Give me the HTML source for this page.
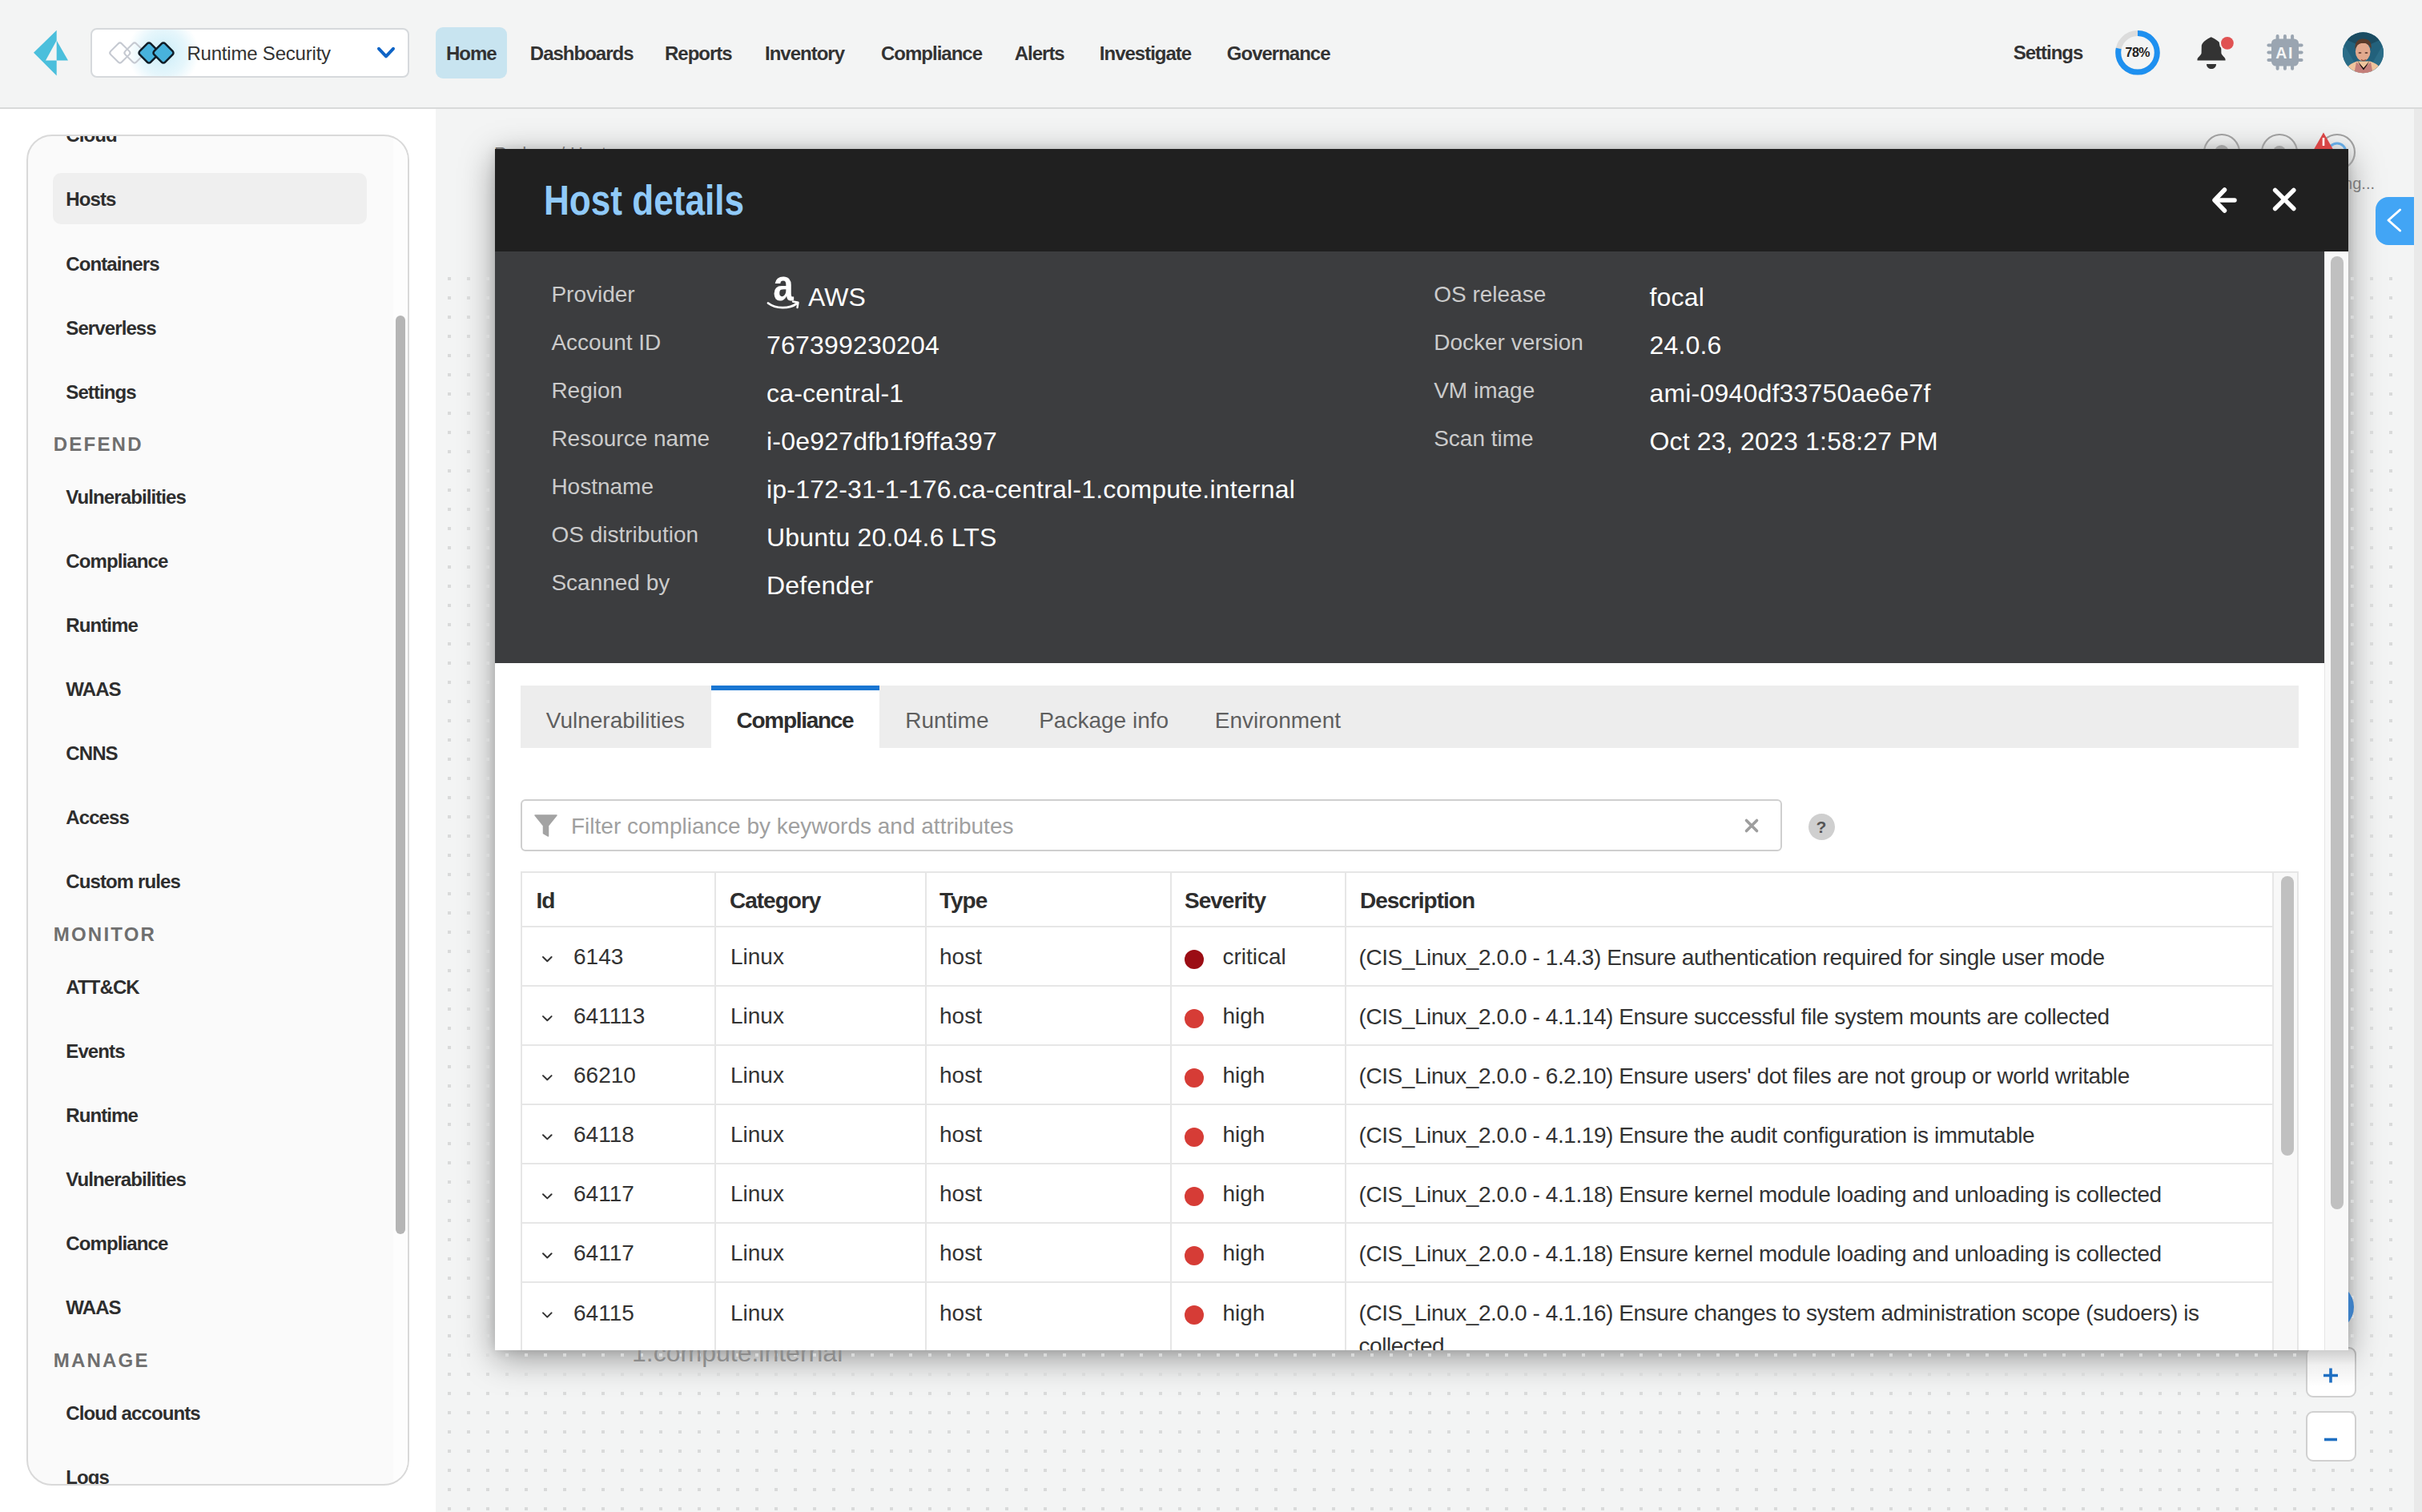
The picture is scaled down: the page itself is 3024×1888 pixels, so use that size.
<!DOCTYPE html>
<html><head><meta charset="utf-8"><title>Host details</title>
<style>
html,body{margin:0;padding:0;}
body{width:3024px;height:1888px;overflow:hidden;position:relative;background:#fff;font-family:"Liberation Sans",sans-serif;}
.a{position:absolute;}
.t{position:absolute;line-height:1;white-space:nowrap;font-family:"Liberation Sans",sans-serif;}
@media (max-width:2000px){html{zoom:0.5;}}
</style></head><body>
<div class="a" style="left:544px;top:136px;width:2470px;height:1752px;background:#f3f4f4;"></div>
<div class="a" style="left:3014px;top:136px;width:10px;height:1752px;background:#e9e9e9;"></div>
<div class="a" style="left:0;top:0;width:3024px;height:134px;background:#f3f4f4;border-bottom:2px solid #d8dada;"></div>
<svg class="a" style="left:0;top:0" width="100" height="110"><polygon points="42,65.7 70.7,37.7 70.7,50.4 57,75.6 70.7,75.6 70.7,94.5" fill="#4bbfdc"/><polygon points="70.7,50.4 85,75.6 70.7,75.6" fill="#4bbfdc"/></svg>
<div class="a" style="left:113px;top:35px;width:394px;height:58px;background:#fff;border:2px solid #d6d9dc;border-radius:8px;"></div>
<div class="a" style="left:115px;top:37px;width:394px;height:58px;overflow:hidden;border-radius:6px;"><div class="a" style="left:44px;top:-16px;width:90px;height:90px;border-radius:50%;background:radial-gradient(circle, rgba(140,215,240,0.45) 0%, rgba(140,215,240,0.22) 45%, rgba(140,215,240,0) 70%);"></div></div>
<svg class="a" style="left:120px;top:40px" width="120" height="54">
<g stroke-width="2.6" stroke-linejoin="round">
<rect x="-9.7" y="-9.7" width="19.4" height="19.4" rx="3" transform="translate(29.8,26) rotate(45)" fill="none" stroke="#c5c9d1" stroke-width="2.1"/>
<rect x="-9.7" y="-9.7" width="19.4" height="19.4" rx="3" transform="translate(48,26) rotate(45)" fill="none" stroke="#c5c9d1" stroke-width="2.1"/>
<rect x="-9.7" y="-9.7" width="19.4" height="19.4" rx="3" transform="translate(66,26) rotate(45)" fill="#48b2dc" stroke="#0f1c26" stroke-width="2.5"/>
<rect x="-9.7" y="-9.7" width="19.4" height="19.4" rx="3" transform="translate(84,26) rotate(45)" fill="#48b2dc" stroke="#0f1c26" stroke-width="2.5"/>
</g></svg>
<svg class="a" style="left:460px;top:50px" width="44" height="30"><polyline points="13,10.8 22,20.4 31,10.8" fill="none" stroke="#0f64c6" stroke-width="4" stroke-linecap="round" stroke-linejoin="round"/></svg>
<div class="a" style="left:544px;top:34px;width:89px;height:64px;background:#c8e4f0;border-radius:9px;"></div>
<div class="t" style="left:233.4px;top:54.8px;font-size:24px;color:#333;letter-spacing:-0.2px;">Runtime Security</div>
<div class="t" style="left:557.0px;top:55.0px;font-size:24px;color:#333;font-weight:700;letter-spacing:-1.0px;">Home</div>
<div class="t" style="left:661.8px;top:55.0px;font-size:24px;color:#333;font-weight:700;letter-spacing:-1.0px;">Dashboards</div>
<div class="t" style="left:830.0px;top:55.0px;font-size:24px;color:#333;font-weight:700;letter-spacing:-1.0px;">Reports</div>
<div class="t" style="left:955.0px;top:55.0px;font-size:24px;color:#333;font-weight:700;letter-spacing:-1.0px;">Inventory</div>
<div class="t" style="left:1100.0px;top:55.0px;font-size:24px;color:#333;font-weight:700;letter-spacing:-1.0px;">Compliance</div>
<div class="t" style="left:1266.7px;top:55.0px;font-size:24px;color:#333;font-weight:700;letter-spacing:-1.0px;">Alerts</div>
<div class="t" style="left:1372.8px;top:55.0px;font-size:24px;color:#333;font-weight:700;letter-spacing:-1.0px;">Investigate</div>
<div class="t" style="left:1531.8px;top:55.0px;font-size:24px;color:#333;font-weight:700;letter-spacing:-1.0px;">Governance</div>
<div class="t" style="left:2513.7px;top:54.3px;font-size:24px;color:#333;font-weight:700;letter-spacing:-1.0px;">Settings</div>
<svg class="a" style="left:2636px;top:33px" width="66" height="66">
<circle cx="33" cy="32.8" r="24.3" fill="none" stroke="#dcdcdc" stroke-width="7"/>
<circle cx="33" cy="32.8" r="24.3" fill="none" stroke="#1e90f0" stroke-width="7" stroke-dasharray="119.1 200" transform="rotate(-90 33 32.8)"/>
</svg>
<div class="t" style="left:2653.5px;top:58.0px;font-size:16px;color:#222;font-weight:700;letter-spacing:-0.5px;">78%</div>
<svg class="a" style="left:2738px;top:42px" width="60" height="50">
<path d="M22.7,4.2 C17.5,6.8 12.2,10 10.8,14.8 L10.6,24.5 C9.5,28 5.5,29.8 5.5,32 L5.5,33.6 L40.5,33.6 L40.5,32 C40.5,29.8 36.5,28 35.4,24.5 L35.2,14.8 C33.8,10 28,6.8 22.7,4.2 Z" fill="#333"/>
<path d="M17,37.9 L29,37.9 C29,42 26,43.9 23,43.9 C20,43.9 17,42 17,37.9 Z" fill="#333"/>
<circle cx="42.9" cy="11.8" r="10" fill="#f3f4f4"/>
<circle cx="42.9" cy="11.8" r="7.9" fill="#e05252"/>
</svg>
<svg class="a" style="left:2826px;top:38px" width="56" height="56">
<rect x="10" y="10.5" width="34" height="34.1" rx="5.5" fill="#9aa5b1"/>
<g fill="#9aa5b1">
<rect x="15.6" y="4.9" width="4" height="8" rx="2"/><rect x="24.9" y="4.9" width="4" height="8" rx="2"/><rect x="34.1" y="4.9" width="4" height="8" rx="2"/>
<rect x="15.6" y="42" width="4" height="7.8" rx="2"/><rect x="24.9" y="42" width="4" height="7.8" rx="2"/><rect x="34.1" y="42" width="4" height="7.8" rx="2"/>
<rect x="4.4" y="16.5" width="8" height="4" rx="2"/><rect x="4.4" y="25.4" width="8" height="4" rx="2"/><rect x="4.4" y="35" width="8" height="4" rx="2"/>
<rect x="41.6" y="16.5" width="8" height="4" rx="2"/><rect x="41.6" y="25.4" width="8" height="4" rx="2"/><rect x="41.6" y="35" width="8" height="4" rx="2"/>
</g>
<text x="26.6" y="35" text-anchor="middle" font-family="Liberation Sans" font-weight="700" font-size="19.5" letter-spacing="1.5" fill="#f5f6f6">AI</text>
</svg>
<svg class="a" style="left:2924px;top:39px" width="54" height="54">
<defs><clipPath id="av"><circle cx="26.5" cy="26.8" r="25.5"/></clipPath></defs>
<g clip-path="url(#av)">
<rect width="54" height="54" fill="#22617c"/>
<polygon points="0,0 54,0 54,8 27,20 0,8" fill="#1b4c62"/>
<polygon points="0,12 22,50 0,54" fill="#2b6d88"/>
<polygon points="54,12 32,50 54,54" fill="#2b6d88"/>
<path d="M2,54 C5,44 11,40 19,37.5 L35,37.5 C43,40 49,44 52,54 Z" fill="#efc49c"/>
<polygon points="15,54 18,38.5 27,46 36,38.5 39,54" fill="#c47f7a"/>
<polygon points="19.5,37 27,46 34.5,37 31,43 27,48.5 23,43" fill="#1a1010"/>
<ellipse cx="26.2" cy="25.5" rx="9.3" ry="11.5" fill="#e2a98d"/>
<path d="M16.5,23 C15.5,13 21,9 27,9.5 C33,9.5 37.5,13 36.5,22 C34,15.5 30,14.5 26,15 C21,15 18.5,17 16.5,23 Z" fill="#5b3b2a"/>
<ellipse cx="22.5" cy="27" rx="2" ry="0.9" fill="#6a4438"/><ellipse cx="30.5" cy="27" rx="2" ry="0.9" fill="#6a4438"/>
<path d="M24,35.5 C26,37 28,37 30,35.5" stroke="#8a4b3e" stroke-width="1.4" fill="none"/>
</g></svg>
<div class="a" style="left:33px;top:168px;width:474px;height:1683px;border:2px solid #d9d9d9;border-radius:32px;background:#fafafa;overflow:hidden;">
<div class="a" style="left:456px;top:0;width:22px;height:1700px;background:#fdfdfd;"></div>
<div class="a" style="left:31px;top:46px;width:392px;height:64px;background:#efefef;border-radius:10px;"></div>
<div class="a" style="left:459px;top:224px;width:12px;height:1147px;background:#b5b5b5;border-radius:6px;"></div>
<div class="t" style="left:47.3px;top:-12.6px;font-size:24px;color:#2e2e2e;font-weight:700;letter-spacing:-0.9px;">Cloud</div>
<div class="t" style="left:47.3px;top:67.4px;font-size:24px;color:#2e2e2e;font-weight:700;letter-spacing:-0.9px;">Hosts</div>
<div class="t" style="left:47.3px;top:147.5px;font-size:24px;color:#2e2e2e;font-weight:700;letter-spacing:-0.9px;">Containers</div>
<div class="t" style="left:47.3px;top:227.6px;font-size:24px;color:#2e2e2e;font-weight:700;letter-spacing:-0.9px;">Serverless</div>
<div class="t" style="left:47.3px;top:307.5px;font-size:24px;color:#2e2e2e;font-weight:700;letter-spacing:-0.9px;">Settings</div>
<div class="t" style="left:47.3px;top:439.3px;font-size:24px;color:#2e2e2e;font-weight:700;letter-spacing:-0.9px;">Vulnerabilities</div>
<div class="t" style="left:47.3px;top:519.4px;font-size:24px;color:#2e2e2e;font-weight:700;letter-spacing:-0.9px;">Compliance</div>
<div class="t" style="left:47.3px;top:599.4px;font-size:24px;color:#2e2e2e;font-weight:700;letter-spacing:-0.9px;">Runtime</div>
<div class="t" style="left:47.3px;top:679.4px;font-size:24px;color:#2e2e2e;font-weight:700;letter-spacing:-0.9px;">WAAS</div>
<div class="t" style="left:47.3px;top:759.4px;font-size:24px;color:#2e2e2e;font-weight:700;letter-spacing:-0.9px;">CNNS</div>
<div class="t" style="left:47.3px;top:839.4px;font-size:24px;color:#2e2e2e;font-weight:700;letter-spacing:-0.9px;">Access</div>
<div class="t" style="left:47.3px;top:919.4px;font-size:24px;color:#2e2e2e;font-weight:700;letter-spacing:-0.9px;">Custom rules</div>
<div class="t" style="left:47.3px;top:1051.4px;font-size:24px;color:#2e2e2e;font-weight:700;letter-spacing:-0.9px;">ATT&amp;CK</div>
<div class="t" style="left:47.3px;top:1131.4px;font-size:24px;color:#2e2e2e;font-weight:700;letter-spacing:-0.9px;">Events</div>
<div class="t" style="left:47.3px;top:1211.4px;font-size:24px;color:#2e2e2e;font-weight:700;letter-spacing:-0.9px;">Runtime</div>
<div class="t" style="left:47.3px;top:1291.4px;font-size:24px;color:#2e2e2e;font-weight:700;letter-spacing:-0.9px;">Vulnerabilities</div>
<div class="t" style="left:47.3px;top:1371.4px;font-size:24px;color:#2e2e2e;font-weight:700;letter-spacing:-0.9px;">Compliance</div>
<div class="t" style="left:47.3px;top:1450.9px;font-size:24px;color:#2e2e2e;font-weight:700;letter-spacing:-0.9px;">WAAS</div>
<div class="t" style="left:47.3px;top:1582.9px;font-size:24px;color:#2e2e2e;font-weight:700;letter-spacing:-0.9px;">Cloud accounts</div>
<div class="t" style="left:47.3px;top:1662.7px;font-size:24px;color:#2e2e2e;font-weight:700;letter-spacing:-0.9px;">Logs</div>
<div class="t" style="left:31.8px;top:372.9px;font-size:24px;color:#6f6f6f;font-weight:700;letter-spacing:2.2px;">DEFEND</div>
<div class="t" style="left:31.8px;top:984.9px;font-size:24px;color:#6f6f6f;font-weight:700;letter-spacing:2.2px;">MONITOR</div>
<div class="t" style="left:31.8px;top:1516.8px;font-size:24px;color:#6f6f6f;font-weight:700;letter-spacing:2.2px;">MANAGE</div>
</div>
<div class="a" style="left:618px;top:186px;width:2314px;height:1500px;background:#fff;box-shadow:0 10px 40px rgba(0,0,0,0.38),0 0 12px rgba(0,0,0,0.12);"></div>
<svg class="a" style="left:544px;top:336px" width="2454" height="1552"><defs><pattern id="dots" x="15" y="10" width="24" height="24" patternUnits="userSpaceOnUse"><rect x="0" y="0" width="4" height="4" fill="#d9dada"/></pattern></defs><rect width="2470" height="1552" fill="url(#dots)"/></svg>
<div class="t" style="left:617.0px;top:181.4px;font-size:22px;color:#707070;">Radar</div>
<div class="t" style="left:699.0px;top:181.4px;font-size:22px;color:#707070;">/</div>
<div class="t" style="left:712.0px;top:181.4px;font-size:22px;color:#707070;">Hosts</div>
<svg class="a" style="left:2740px;top:150px" width="220" height="100">
<circle cx="34" cy="40" r="22" fill="none" stroke="#9e9e9e" stroke-width="2.2"/>
<circle cx="34" cy="40" r="9" fill="#9e9e9e"/>
<circle cx="106" cy="40" r="22" fill="none" stroke="#9e9e9e" stroke-width="2.2"/>
<circle cx="106" cy="40" r="8" fill="#9e9e9e"/>
<circle cx="178" cy="40" r="22" fill="none" stroke="#9e9e9e" stroke-width="2.2"/>
<circle cx="178" cy="40" r="11" fill="none" stroke="#64a8e0" stroke-width="3"/>
<polygon points="161,15.5 175,40 147,40" fill="#d84545"/>
<rect x="159.7" y="22" width="2.6" height="10" fill="#fff"/>
</svg>
<div class="t" style="left:0.0px;top:219.1px;font-size:20px;color:#7a7a7a;left:auto;right:59px;">Loading...</div>
<div class="a" style="left:2966px;top:246px;width:48px;height:60px;background:#42a5f5;border-radius:16px 0 0 16px;"></div>
<svg class="a" style="left:2966px;top:246px" width="48" height="60"><polyline points="30.6,16 16,29 30.6,42" fill="none" stroke="#fff" stroke-width="3" stroke-linecap="round" stroke-linejoin="round"/></svg>
<div class="a" style="left:2879px;top:1602px;width:60px;height:60px;border-radius:50%;background:#3d7fc4;"></div>
<div class="a" style="left:2879px;top:1682px;width:59px;height:59px;background:#fff;border:2px solid #d0d0d0;border-radius:9px;"></div>
<div class="a" style="left:2879px;top:1762px;width:59px;height:59px;background:#fff;border:2px solid #d0d0d0;border-radius:9px;"></div>
<div class="a" style="left:2879px;top:1682px;width:63px;height:50px;border-radius:9px 9px 0 0;background:linear-gradient(180deg,rgba(0,0,0,0.22),rgba(0,0,0,0.06) 45%,rgba(0,0,0,0));"></div>
<svg class="a" style="left:2879px;top:1682px" width="63" height="145">
<path d="M31,26.5 V44.5 M22,35.5 H40" stroke="#1f6fc2" stroke-width="3.6" fill="none"/>
<path d="M23,115.5 H39" stroke="#1f6fc2" stroke-width="3.6" fill="none"/>
</svg>
<div class="t" style="left:789.0px;top:1672.9px;font-size:32px;color:#8c8c8c;">1.compute.internal</div>
<div class="a" style="left:618px;top:186px;width:2314px;height:1500px;background:#fff;overflow:hidden;">
<div class="a" style="left:0;top:0;width:2314px;height:128px;background:#202020;"></div>
<div class="a" style="left:0;top:128px;width:2284px;height:514px;background:#3c3d3f;"></div>
<div class="a" style="left:2284px;top:128px;width:30px;height:1372px;background:#f8f8f8;border-left:1px solid #e6e6e6;box-sizing:border-box;"></div>
<div class="a" style="left:2292px;top:134px;width:16px;height:1190px;background:#c0c0c0;border-radius:8px;"></div>
<svg class="a" style="left:2130px;top:40px" width="130" height="50">
<path d="M14,15 L2,-0 M0,0" stroke="none"/>
<g stroke="#fff" stroke-width="5.5" stroke-linecap="round" stroke-linejoin="round" fill="none">
<polyline points="29.5,11 17,24 29.5,37"/><line x1="18" y1="24" x2="42" y2="24"/>
<line x1="92.6" y1="11.5" x2="115.8" y2="34.5"/><line x1="115.8" y1="11.5" x2="92.6" y2="34.5"/>
</g></svg>
</div>
<div class="a" style="left:0;top:0;width:2932px;height:1686px;overflow:hidden;">
<div class="t" style="left:678.5px;top:225.1px;font-size:51px;color:#90caf9;font-weight:700;transform:scaleX(0.865);transform-origin:0 0;">Host details</div>
<div class="t" style="left:688.4px;top:354.4px;font-size:28px;color:#cbcbcb;">Provider</div>
<div class="t" style="left:688.4px;top:414.4px;font-size:28px;color:#cbcbcb;">Account ID</div>
<div class="t" style="left:957.0px;top:415.0px;font-size:32px;color:#ffffff;letter-spacing:0.2px;">767399230204</div>
<div class="t" style="left:688.4px;top:474.4px;font-size:28px;color:#cbcbcb;">Region</div>
<div class="t" style="left:957.0px;top:474.9px;font-size:32px;color:#ffffff;letter-spacing:0.2px;">ca-central-1</div>
<div class="t" style="left:688.4px;top:534.4px;font-size:28px;color:#cbcbcb;">Resource name</div>
<div class="t" style="left:957.0px;top:534.8px;font-size:32px;color:#ffffff;letter-spacing:0.2px;">i-0e927dfb1f9ffa397</div>
<div class="t" style="left:688.4px;top:594.4px;font-size:28px;color:#cbcbcb;">Hostname</div>
<div class="t" style="left:957.0px;top:594.7px;font-size:32px;color:#ffffff;letter-spacing:0.2px;">ip-172-31-1-176.ca-central-1.compute.internal</div>
<div class="t" style="left:688.4px;top:654.4px;font-size:28px;color:#cbcbcb;">OS distribution</div>
<div class="t" style="left:957.0px;top:654.6px;font-size:32px;color:#ffffff;letter-spacing:0.2px;">Ubuntu 20.04.6 LTS</div>
<div class="t" style="left:688.4px;top:714.4px;font-size:28px;color:#cbcbcb;">Scanned by</div>
<div class="t" style="left:957.0px;top:714.5px;font-size:32px;color:#ffffff;letter-spacing:0.2px;">Defender</div>
<div class="t" style="left:1009.1px;top:355.3px;font-size:32px;color:#ffffff;">AWS</div>
<svg class="a" style="left:955px;top:343px" width="48" height="48">
<text transform="translate(23,32) scale(1,1.22)" x="0" y="0" text-anchor="middle" font-family="Liberation Sans" font-weight="700" font-size="46" fill="#fff">a</text>
<path d="M4,35.5 C14,43 30,43 40,36" fill="none" stroke="#fff" stroke-width="2.8" stroke-linecap="round"/>
<path d="M35,33.5 L41.5,34.8 L40.5,41" fill="none" stroke="#fff" stroke-width="2.4" stroke-linecap="round" stroke-linejoin="round"/>
</svg>
<div class="t" style="left:1790.2px;top:354.4px;font-size:28px;color:#cbcbcb;">OS release</div>
<div class="t" style="left:2059.4px;top:355.1px;font-size:32px;color:#ffffff;letter-spacing:0.2px;">focal</div>
<div class="t" style="left:1790.2px;top:414.4px;font-size:28px;color:#cbcbcb;">Docker version</div>
<div class="t" style="left:2059.4px;top:415.0px;font-size:32px;color:#ffffff;letter-spacing:0.2px;">24.0.6</div>
<div class="t" style="left:1790.2px;top:474.4px;font-size:28px;color:#cbcbcb;">VM image</div>
<div class="t" style="left:2059.4px;top:474.9px;font-size:32px;color:#ffffff;letter-spacing:0.2px;">ami-0940df33750ae6e7f</div>
<div class="t" style="left:1790.2px;top:534.4px;font-size:28px;color:#cbcbcb;">Scan time</div>
<div class="t" style="left:2059.4px;top:534.8px;font-size:32px;color:#ffffff;letter-spacing:0.2px;">Oct 23, 2023 1:58:27 PM</div>
<div class="a" style="left:650px;top:856px;width:2220px;height:78px;background:#ededed;"></div>
<div class="a" style="left:888px;top:856px;width:210px;height:78px;background:#fff;"></div>
<div class="a" style="left:888px;top:856px;width:210px;height:6px;background:#1976d2;"></div>
<div class="t" style="left:681.8px;top:885.5px;font-size:28px;color:#5f5f5f;">Vulnerabilities</div>
<div class="t" style="left:919.6px;top:885.5px;font-size:28px;color:#2e2e2e;font-weight:700;letter-spacing:-1.3px;">Compliance</div>
<div class="t" style="left:1130.2px;top:885.5px;font-size:28px;color:#5f5f5f;">Runtime</div>
<div class="t" style="left:1297.2px;top:885.5px;font-size:28px;color:#5f5f5f;">Package info</div>
<div class="t" style="left:1516.8px;top:885.5px;font-size:28px;color:#5f5f5f;">Environment</div>
<div class="a" style="left:650px;top:998px;width:1571px;height:61px;background:#fff;border:2px solid #cfcfcf;border-radius:6px;"></div>
<svg class="a" style="left:664px;top:1014px" width="36" height="34"><path d="M4,4 H31 L20.5,17 V30 L14.5,26.5 V17 Z" fill="#a3a3a3" stroke="#a3a3a3" stroke-width="1.5" stroke-linejoin="round"/></svg>
<svg class="a" style="left:2174px;top:1018px" width="26" height="26"><path d="M6.5,6.5 L19.5,19.5 M19.5,6.5 L6.5,19.5" stroke="#9e9e9e" stroke-width="3.6" stroke-linecap="round"/></svg>
<div class="a" style="left:2257.5px;top:1015.5px;width:33px;height:33px;border-radius:50%;background:#cfcfcf;"></div>
<div class="t" style="left:713.0px;top:1018.3px;font-size:28px;color:#a0a0a0;">Filter compliance by keywords and attributes</div>
<div class="t" style="left:2267.5px;top:1022.2px;font-size:21px;color:#555;font-weight:700;">?</div>
<div class="a" style="left:650px;top:1088px;width:2220px;height:620px;overflow:hidden;">
<div class="a" style="left:0;top:0;width:2189px;height:620px;background:#fff;border:2px solid #e6e6e6;box-sizing:border-box;"></div>
<div class="a" style="left:2189px;top:0;width:31px;height:620px;background:#f8f8f8;border:2px solid #e6e6e6;border-left:none;box-sizing:border-box;"></div>
<div class="a" style="left:2198px;top:6px;width:16px;height:349px;background:#c0c0c0;border-radius:8px;"></div>
<div class="a" style="left:241.5px;top:0;width:2px;height:620px;background:#e6e6e6;"></div>
<div class="a" style="left:505.0px;top:0;width:2px;height:620px;background:#e6e6e6;"></div>
<div class="a" style="left:811.0px;top:0;width:2px;height:620px;background:#e6e6e6;"></div>
<div class="a" style="left:1029.0px;top:0;width:2px;height:620px;background:#e6e6e6;"></div>
<div class="a" style="left:0;top:67.5px;width:2189px;height:2px;background:#e6e6e6;"></div>
<div class="a" style="left:0;top:141.6px;width:2189px;height:2px;background:#e6e6e6;"></div>
<div class="a" style="left:0;top:215.6px;width:2189px;height:2px;background:#e6e6e6;"></div>
<div class="a" style="left:0;top:289.7px;width:2189px;height:2px;background:#e6e6e6;"></div>
<div class="a" style="left:0;top:363.7px;width:2189px;height:2px;background:#e6e6e6;"></div>
<div class="a" style="left:0;top:437.8px;width:2189px;height:2px;background:#e6e6e6;"></div>
<div class="a" style="left:0;top:511.9px;width:2189px;height:2px;background:#e6e6e6;"></div>
</div>
<div class="t" style="left:669.5px;top:1110.9px;font-size:28px;color:#2e2e2e;font-weight:700;letter-spacing:-1.0px;">Id</div>
<div class="t" style="left:911.0px;top:1110.9px;font-size:28px;color:#2e2e2e;font-weight:700;letter-spacing:-1.0px;">Category</div>
<div class="t" style="left:1173.0px;top:1110.9px;font-size:28px;color:#2e2e2e;font-weight:700;letter-spacing:-1.0px;">Type</div>
<div class="t" style="left:1479.0px;top:1110.9px;font-size:28px;color:#2e2e2e;font-weight:700;letter-spacing:-1.0px;">Severity</div>
<div class="t" style="left:1698.0px;top:1110.9px;font-size:28px;color:#2e2e2e;font-weight:700;letter-spacing:-1.0px;">Description</div>
<div class="t" style="left:716.0px;top:1181.1px;font-size:28px;color:#333;">6143</div>
<div class="t" style="left:912.0px;top:1181.1px;font-size:28px;color:#333;">Linux</div>
<div class="t" style="left:1173.0px;top:1181.1px;font-size:28px;color:#333;">host</div>
<div class="t" style="left:1526.5px;top:1181.1px;font-size:28px;color:#333;">critical</div>
<div class="t" style="left:1696.5px;top:1181.8px;font-size:28px;color:#333;letter-spacing:-0.42px;">(CIS_Linux_2.0.0 - 1.4.3) Ensure authentication required for single user mode</div>
<div class="a" style="left:1479px;top:1186.0px;width:24px;height:24px;border-radius:50%;background:#9b0d14;"></div>
<div class="t" style="left:716.0px;top:1255.2px;font-size:28px;color:#333;">641113</div>
<div class="t" style="left:912.0px;top:1255.2px;font-size:28px;color:#333;">Linux</div>
<div class="t" style="left:1173.0px;top:1255.2px;font-size:28px;color:#333;">host</div>
<div class="t" style="left:1526.5px;top:1255.2px;font-size:28px;color:#333;">high</div>
<div class="t" style="left:1696.5px;top:1255.9px;font-size:28px;color:#333;letter-spacing:-0.42px;">(CIS_Linux_2.0.0 - 4.1.14) Ensure successful file system mounts are collected</div>
<div class="a" style="left:1479px;top:1260.1px;width:24px;height:24px;border-radius:50%;background:#d63c36;"></div>
<div class="t" style="left:716.0px;top:1329.2px;font-size:28px;color:#333;">66210</div>
<div class="t" style="left:912.0px;top:1329.2px;font-size:28px;color:#333;">Linux</div>
<div class="t" style="left:1173.0px;top:1329.2px;font-size:28px;color:#333;">host</div>
<div class="t" style="left:1526.5px;top:1329.2px;font-size:28px;color:#333;">high</div>
<div class="t" style="left:1696.5px;top:1329.9px;font-size:28px;color:#333;letter-spacing:-0.42px;">(CIS_Linux_2.0.0 - 6.2.10) Ensure users' dot files are not group or world writable</div>
<div class="a" style="left:1479px;top:1334.1px;width:24px;height:24px;border-radius:50%;background:#d63c36;"></div>
<div class="t" style="left:716.0px;top:1403.3px;font-size:28px;color:#333;">64118</div>
<div class="t" style="left:912.0px;top:1403.3px;font-size:28px;color:#333;">Linux</div>
<div class="t" style="left:1173.0px;top:1403.3px;font-size:28px;color:#333;">host</div>
<div class="t" style="left:1526.5px;top:1403.3px;font-size:28px;color:#333;">high</div>
<div class="t" style="left:1696.5px;top:1404.0px;font-size:28px;color:#333;letter-spacing:-0.42px;">(CIS_Linux_2.0.0 - 4.1.19) Ensure the audit configuration is immutable</div>
<div class="a" style="left:1479px;top:1408.2px;width:24px;height:24px;border-radius:50%;background:#d63c36;"></div>
<div class="t" style="left:716.0px;top:1477.3px;font-size:28px;color:#333;">64117</div>
<div class="t" style="left:912.0px;top:1477.3px;font-size:28px;color:#333;">Linux</div>
<div class="t" style="left:1173.0px;top:1477.3px;font-size:28px;color:#333;">host</div>
<div class="t" style="left:1526.5px;top:1477.3px;font-size:28px;color:#333;">high</div>
<div class="t" style="left:1696.5px;top:1478.0px;font-size:28px;color:#333;letter-spacing:-0.42px;">(CIS_Linux_2.0.0 - 4.1.18) Ensure kernel module loading and unloading is collected</div>
<div class="a" style="left:1479px;top:1482.2px;width:24px;height:24px;border-radius:50%;background:#d63c36;"></div>
<div class="t" style="left:716.0px;top:1551.4px;font-size:28px;color:#333;">64117</div>
<div class="t" style="left:912.0px;top:1551.4px;font-size:28px;color:#333;">Linux</div>
<div class="t" style="left:1173.0px;top:1551.4px;font-size:28px;color:#333;">host</div>
<div class="t" style="left:1526.5px;top:1551.4px;font-size:28px;color:#333;">high</div>
<div class="t" style="left:1696.5px;top:1552.1px;font-size:28px;color:#333;letter-spacing:-0.42px;">(CIS_Linux_2.0.0 - 4.1.18) Ensure kernel module loading and unloading is collected</div>
<div class="a" style="left:1479px;top:1556.3px;width:24px;height:24px;border-radius:50%;background:#d63c36;"></div>
<div class="t" style="left:716.0px;top:1625.5px;font-size:28px;color:#333;">64115</div>
<div class="t" style="left:912.0px;top:1625.5px;font-size:28px;color:#333;">Linux</div>
<div class="t" style="left:1173.0px;top:1625.5px;font-size:28px;color:#333;">host</div>
<div class="t" style="left:1526.5px;top:1625.5px;font-size:28px;color:#333;">high</div>
<div class="t" style="left:1696.5px;top:1626.2px;font-size:28px;color:#333;letter-spacing:-0.42px;">(CIS_Linux_2.0.0 - 4.1.16) Ensure changes to system administration scope (sudoers) is</div>
<div class="a" style="left:1479px;top:1630.4px;width:24px;height:24px;border-radius:50%;background:#d63c36;"></div>
<div class="t" style="left:1696.5px;top:1666.8px;font-size:28px;color:#333;letter-spacing:-0.42px;">collected</div>
<svg class="a" style="left:0;top:0" width="3024" height="1888"><g fill="none" stroke="#333" stroke-width="2" stroke-linecap="round" stroke-linejoin="round"><polyline points="678,1195.0 683.3,1200.2 688.6,1195.0"/><polyline points="678,1269.1 683.3,1274.3 688.6,1269.1"/><polyline points="678,1343.1 683.3,1348.3 688.6,1343.1"/><polyline points="678,1417.2 683.3,1422.4 688.6,1417.2"/><polyline points="678,1491.2 683.3,1496.4 688.6,1491.2"/><polyline points="678,1565.3 683.3,1570.5 688.6,1565.3"/><polyline points="678,1639.4 683.3,1644.6 688.6,1639.4"/></g></svg>
</div>
</body></html>
